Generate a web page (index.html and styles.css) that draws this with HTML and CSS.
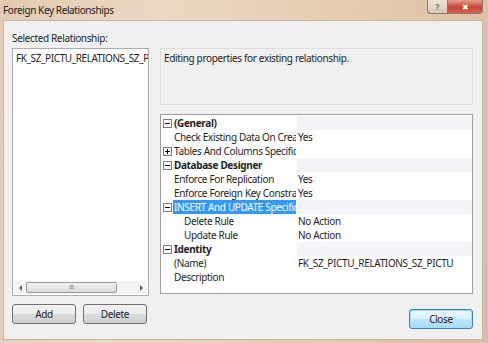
FILE: index.html
```html
<!DOCTYPE html>
<html lang="en">
<head>
    <meta charset="UTF-8">
    <title>Foreign Key Relationships</title>
    <link rel="stylesheet" href="styles.css">
</head>
<body>
    <div class="window">
        <div class="titlebar">
            <span class="title">Foreign Key Relationships</span>
            <div class="caption-buttons">
                <span class="btn-help">?</span>
                <span class="btn-close">&#x2716;</span>
            </div>
        </div>
        <div class="client">
            <div class="left-col">
                <div class="label">Selected Relationship:</div>
                <div class="listbox">
                    <div class="list-item">FK_SZ_PICTU_RELATIONS_SZ_P</div>
                    <div class="hscroll">
                        <span class="arrow arrow-left"></span>
                        <span class="thumb">III</span>
                        <span class="arrow arrow-right"></span>
                    </div>
                </div>
                <div class="btn-row">
                    <button class="btn">Add</button>
                    <button class="btn">Delete</button>
                </div>
            </div>
            <div class="right-col">
                <div class="description">Editing properties for existing relationship.</div>
                <div class="propgrid">
                    <div class="row category">
                        <span class="gutter"><svg width="9" height="9" viewBox="0 0 9 9"><rect x="0.5" y="0.5" width="8" height="8" fill="#fff" stroke="#7f7f7f"/><path d="M2 4.5h5" stroke="#000"/></svg></span>
                        <span class="name">(General)</span>
                        <span class="value"></span>
                    </div>
                    <div class="row">
                        <span class="gutter"></span>
                        <span class="name">Check Existing Data On Creation Or Re-Enabling</span>
                        <span class="value">Yes</span>
                    </div>
                    <div class="row">
                        <span class="gutter"><svg width="9" height="9" viewBox="0 0 9 9"><rect x="0.5" y="0.5" width="8" height="8" fill="#fff" stroke="#7f7f7f"/><path d="M2 4.5h5M4.5 2v5" stroke="#000"/></svg></span>
                        <span class="name">Tables And Columns Specification</span>
                        <span class="value"></span>
                    </div>
                    <div class="row category">
                        <span class="gutter"><svg width="9" height="9" viewBox="0 0 9 9"><rect x="0.5" y="0.5" width="8" height="8" fill="#fff" stroke="#7f7f7f"/><path d="M2 4.5h5" stroke="#000"/></svg></span>
                        <span class="name">Database Designer</span>
                        <span class="value"></span>
                    </div>
                    <div class="row">
                        <span class="gutter"></span>
                        <span class="name">Enforce For Replication</span>
                        <span class="value">Yes</span>
                    </div>
                    <div class="row">
                        <span class="gutter"></span>
                        <span class="name">Enforce Foreign Key Constraint</span>
                        <span class="value">Yes</span>
                    </div>
                    <div class="row group">
                        <span class="gutter"><svg width="9" height="9" viewBox="0 0 9 9"><rect x="0.5" y="0.5" width="8" height="8" fill="#fff" stroke="#7f7f7f"/><path d="M2 4.5h5" stroke="#000"/></svg></span>
                        <span class="name selected">INSERT And UPDATE Specification</span>
                        <span class="value"></span>
                    </div>
                    <div class="row">
                        <span class="gutter"></span>
                        <span class="name sub">Delete Rule</span>
                        <span class="value">No Action</span>
                    </div>
                    <div class="row">
                        <span class="gutter"></span>
                        <span class="name sub">Update Rule</span>
                        <span class="value">No Action</span>
                    </div>
                    <div class="row category">
                        <span class="gutter"><svg width="9" height="9" viewBox="0 0 9 9"><rect x="0.5" y="0.5" width="8" height="8" fill="#fff" stroke="#7f7f7f"/><path d="M2 4.5h5" stroke="#000"/></svg></span>
                        <span class="name">Identity</span>
                        <span class="value"></span>
                    </div>
                    <div class="row">
                        <span class="gutter"></span>
                        <span class="name">(Name)</span>
                        <span class="value">FK_SZ_PICTU_RELATIONS_SZ_PICTU</span>
                    </div>
                    <div class="row">
                        <span class="gutter"></span>
                        <span class="name">Description</span>
                        <span class="value"></span>
                    </div>
                </div>
                <div class="btn-row right">
                    <button class="btn default">Close</button>
                </div>
            </div>
        </div>
    </div>
</body>
</html>
```

FILE: styles.css
```css
body {
    margin: 0;
    padding: 0;
    width: 488px;
    height: 343px;
    overflow: hidden;
    font-family: "Noto Sans", "Open Sans", sans-serif;
    font-size: 10px;
    letter-spacing: -0.35px;
    color: #1e1e1e;
}

.window {
    width: 488px;
    height: 343px;
    background: linear-gradient(100deg, #e3cbb2 0%, #ecd9c3 30%, #e6cdb2 60%, #dcbd9f 100%);
    display: flex;
    flex-direction: column;
}

.titlebar {
    height: 20px;
    display: flex;
    align-items: flex-start;
    justify-content: space-between;
}

.title {
    margin: 3px 0 0 3px;
    font-size: 10px;
    letter-spacing: -0.4px;
    color: #222;
}

.caption-buttons {
    display: flex;
    margin-right: 5px;
}

.btn-help,
.btn-close {
    height: 13px;
    display: flex;
    align-items: center;
    justify-content: center;
    font-size: 8px;
    letter-spacing: 0;
    color: #fff;
    border: 1px solid #8b7a6a;
    border-top: none;
}

.btn-help {
    width: 19px;
    background: linear-gradient(#f0e4d8, #d8c8b8);
    color: #7a6c60;
    border-radius: 0 0 0 4px;
    font-weight: bold;
}

.btn-close {
    width: 34px;
    background: linear-gradient(#e8a090, #c84434 55%, #d86050);
    border-left: none;
    border-radius: 0 0 4px 0;
}

.client {
    margin: 0 5px 3px 3px;
    flex: 1;
    background: #f0f0f0;
    border: 1px solid #c6b4a2;
    box-sizing: border-box;
    display: flex;
    padding: 0 9px 0 8px;
    gap: 11px;
}

.left-col {
    width: 137px;
    display: flex;
    flex-direction: column;
}

.label {
    margin-top: 11px;
    height: 16px;
    line-height: 12px;
}

.listbox {
    height: 248px;
    box-sizing: border-box;
    background: #fff;
    border: 1px solid #abadb3;
    display: flex;
    flex-direction: column;
    justify-content: space-between;
}

.list-item {
    padding: 3px 0 0 3px;
    white-space: nowrap;
    overflow: hidden;
    line-height: 12px;
    letter-spacing: -0.4px;
}

.hscroll {
    height: 13px;
    margin: 0 1px 1px 1px;
    display: flex;
    align-items: center;
    background: #f4f4f4;
}

.arrow {
    width: 12px;
    height: 13px;
    position: relative;
}

.arrow::after {
    content: "";
    position: absolute;
    top: 4px;
    border: 3px solid transparent;
}

.arrow-left::after {
    left: 2px;
    border-right-color: #606060;
}

.arrow-right::after {
    left: 5px;
    border-left-color: #606060;
}

.thumb {
    width: 91px;
    height: 11px;
    margin-right: auto;
    box-sizing: border-box;
    border: 1px solid #9a9a9a;
    border-radius: 2px;
    background: linear-gradient(#f2f2f2, #dcdcdc);
    font-size: 6px;
    color: #777;
    text-align: center;
    line-height: 9px;
    letter-spacing: -0.5px;
}

.btn-row {
    display: flex;
    gap: 7px;
    margin-top: 8px;
}

.btn-row.right {
    justify-content: flex-end;
    margin-top: 15px;
}

.btn {
    width: 64px;
    height: 20px;
    padding: 0;
    font-family: "Noto Sans", "Open Sans", sans-serif;
    font-size: 10px;
    letter-spacing: -0.35px;
    color: #1e1e1e;
    border: 1px solid #707070;
    border-radius: 3px;
    background: linear-gradient(#f2f2f2 0%, #ebebeb 50%, #dddddd 51%, #cfcfcf 100%);
}

.btn.default {
    border-color: #3c7fb1;
    box-shadow: inset 0 0 0 1px #9fe0f8;
    background: linear-gradient(#eaf6fd 0%, #d9f0fc 50%, #bee6fd 51%, #a7d9f5 100%);
}

.right-col {
    width: 313px;
    display: flex;
    flex-direction: column;
    padding-top: 27px;
}

.description {
    height: 57px;
    box-sizing: border-box;
    border: 1px solid #dcdcdc;
    padding: 3px 0 0 3px;
    line-height: 12px;
}

.propgrid {
    height: 180px;
    margin-top: 9px;
    box-sizing: border-box;
    background: #fff;
    border: 1px solid #a0a0a0;
    padding-top: 1px;
}

.row {
    height: 14px;
    display: flex;
    align-items: center;
    line-height: 14px;
}

.row.category,
.row.group {
    background: linear-gradient(90deg, #fff 0, #fff 136px, #f2f4f8 136px);
}

.row.category .name {
    font-weight: bold;
}

.gutter {
    width: 12px;
    height: 14px;
    display: flex;
    align-items: center;
    justify-content: center;
    flex-shrink: 0;
}

.gutter svg {
    display: block;
}

.name {
    width: 123px;
    flex-shrink: 0;
    white-space: nowrap;
    overflow: hidden;
    padding-left: 1px;
    box-sizing: border-box;
}

.name.sub {
    padding-left: 11px;
}

.name.selected {
    background: #3399ff;
    color: #fff;
}

.value {
    padding-left: 2px;
    white-space: nowrap;
}
```
